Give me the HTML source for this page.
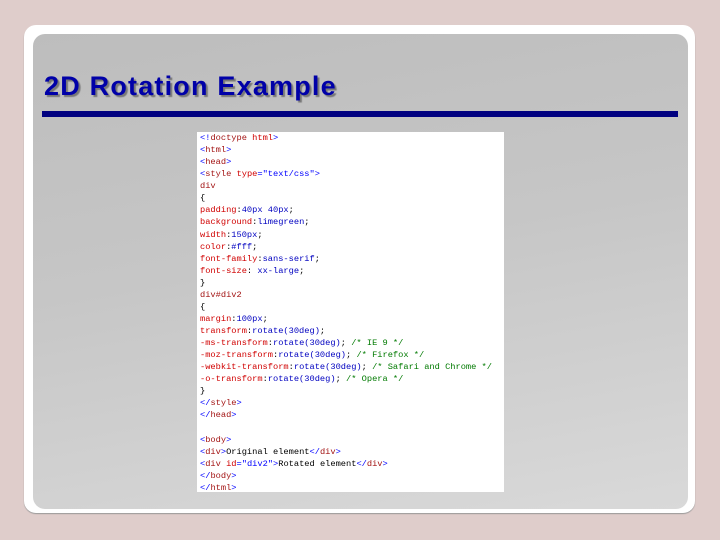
<!DOCTYPE html>
<html><head><style>
html,body{margin:0;padding:0;width:720px;height:540px;overflow:hidden;background:#dfcdcb;}
.frame{position:absolute;left:24px;top:25px;width:671px;height:488px;background:#fff;border-radius:12px;box-shadow:0 1px 1px #999;}
.panel{position:absolute;left:33px;top:34px;width:655px;height:475px;border-radius:12px;background:linear-gradient(170deg,#bdbdbd 0%,#c6c6c6 45%,#d9d9d9 100%);}
h1{position:absolute;left:44px;top:71px;margin:0;font:bold 27px "Liberation Sans",sans-serif;color:#0000a8;text-shadow:2px 2px 1px #777;letter-spacing:1.2px;}
.bar{position:absolute;left:42px;top:111px;width:636px;height:6px;background:#000080;}
.code{position:absolute;left:197px;top:132px;width:307px;height:360px;background:#fff;}
pre{margin:0;position:absolute;left:200px;top:132px;font:8.7px/12.07px "Liberation Mono",monospace;color:#000;}
.t{color:#a31515}.b{color:#0000ff}.p{color:#d00000}.v{color:#0000c0}.c{color:#007a00}
</style></head><body>
<div class="frame"></div><div class="panel"></div>
<h1>2D Rotation Example</h1>
<div class="bar"></div>
<div class="code"></div>
<pre><span class="b">&lt;!</span><span class="t">doctype</span> <span class="p">html</span><span class="b">&gt;</span>
<span class="b">&lt;</span><span class="t">html</span><span class="b">&gt;</span>
<span class="b">&lt;</span><span class="t">head</span><span class="b">&gt;</span>
<span class="b">&lt;</span><span class="t">style</span> <span class="p">type</span><span class="b">="text/css"&gt;</span>
<span class="t">div</span>
{
<span class="p">padding</span>:<span class="v">40px 40px</span>;
<span class="p">background</span>:<span class="v">limegreen</span>;
<span class="p">width</span>:<span class="v">150px</span>;
<span class="p">color</span>:<span class="v">#fff</span>;
<span class="p">font-family</span>:<span class="v">sans-serif</span>;
<span class="p">font-size</span>: <span class="v">xx-large</span>;
}
<span class="t">div#div2</span>
{
<span class="p">margin</span>:<span class="v">100px</span>;
<span class="p">transform</span>:<span class="v">rotate(30deg)</span>;
<span class="p">-ms-transform</span>:<span class="v">rotate(30deg)</span>; <span class="c">/* IE 9 */</span>
<span class="p">-moz-transform</span>:<span class="v">rotate(30deg)</span>; <span class="c">/* Firefox */</span>
<span class="p">-webkit-transform</span>:<span class="v">rotate(30deg)</span>; <span class="c">/* Safari and Chrome */</span>
<span class="p">-o-transform</span>:<span class="v">rotate(30deg)</span>; <span class="c">/* Opera */</span>
}
<span class="b">&lt;/</span><span class="t">style</span><span class="b">&gt;</span>
<span class="b">&lt;/</span><span class="t">head</span><span class="b">&gt;</span>

<span class="b">&lt;</span><span class="t">body</span><span class="b">&gt;</span>
<span class="b">&lt;</span><span class="t">div</span><span class="b">&gt;</span>Original element<span class="b">&lt;/</span><span class="t">div</span><span class="b">&gt;</span>
<span class="b">&lt;</span><span class="t">div</span> <span class="p">id</span><span class="b">="div2"&gt;</span>Rotated element<span class="b">&lt;/</span><span class="t">div</span><span class="b">&gt;</span>
<span class="b">&lt;/</span><span class="t">body</span><span class="b">&gt;</span>
<span class="b">&lt;/</span><span class="t">html</span><span class="b">&gt;</span></pre>
</body></html>
